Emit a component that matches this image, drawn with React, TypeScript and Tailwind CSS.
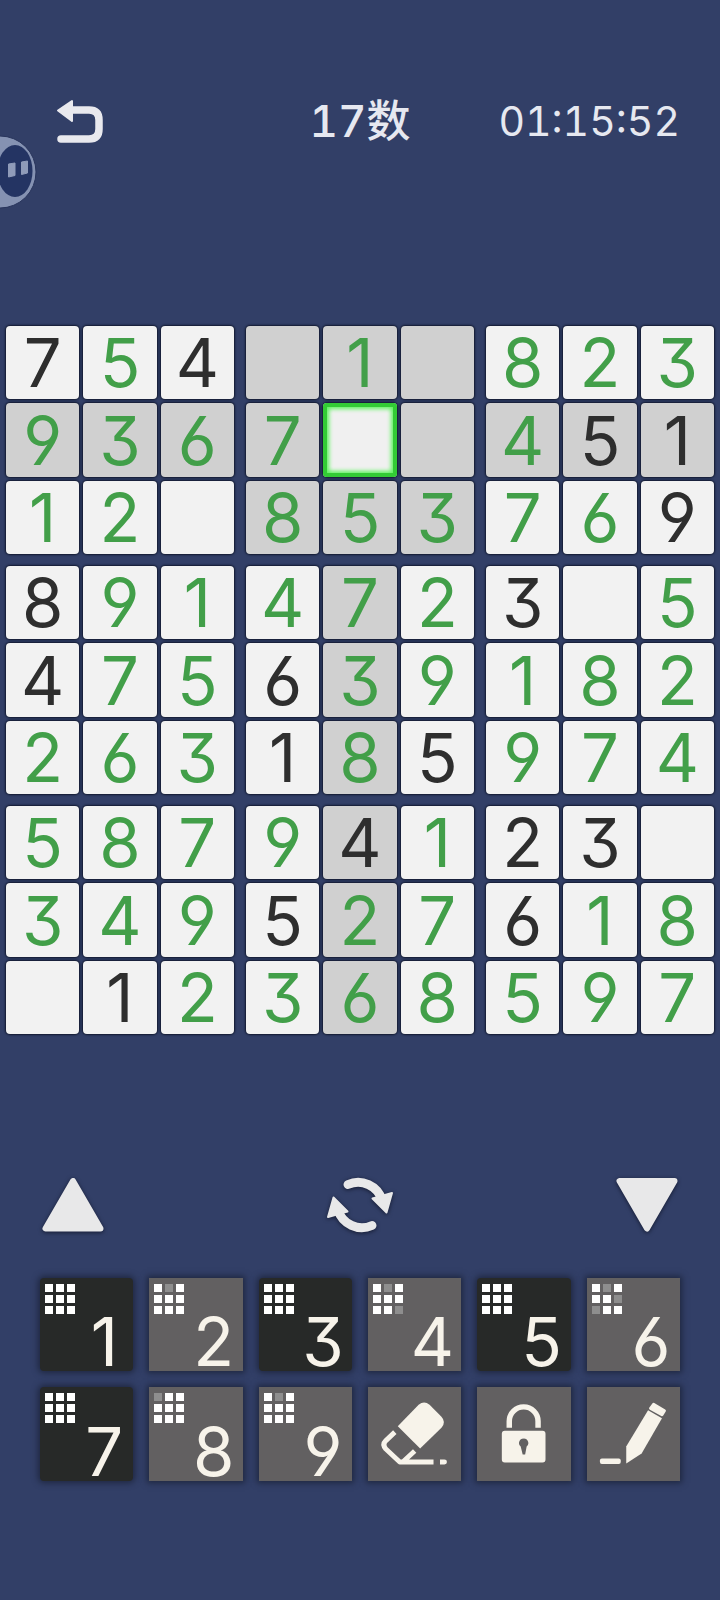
import React, { useState } from 'react';
import clsx from 'clsx';

// 0 is an empty cell
const BOARD = [
  '754010823',
  '936700451',
  '120853769',
  '891472305',
  '475639182',
  '263185974',
  '587941230',
  '349527618',
  '012368597',
];

// 1 marks the clues that came with the puzzle
const GIVEN = [
  '101000000',
  '000000011',
  '000000001',
  '100000100',
  '100100000',
  '000101000',
  '000010110',
  '000100100',
  '010000000',
];

const THREE = [0, 1, 2];

// Flat 3, open 6 and 9
const DIGIT_FONT = "font-['Inter','Liberation_Sans',sans-serif] [font-feature-settings:'cv03','cv04','cv09']";

interface CellProps {
  row: number;
  col: number;
  selected: { row: number; col: number };
  onSelect: (row: number, col: number) => void;
}

const Cell: React.FC<CellProps> = ({ row, col, selected, onSelect }) => {
  const value = BOARD[row][col];
  const isSelected = row === selected.row && col === selected.col;
  const sameBox =
    Math.floor(row / 3) === Math.floor(selected.row / 3) &&
    Math.floor(col / 3) === Math.floor(selected.col / 3);
  const isPeer = row === selected.row || col === selected.col || sameBox;

  return (
    <button
      onClick={() => onSelect(row, col)}
      aria-label={`Row ${row + 1}, column ${col + 1}`}
      className={clsx(
        'flex aspect-square min-w-0 items-center justify-center rounded text-[67px] leading-none',
        DIGIT_FONT,
        isSelected
          ? 'bg-[#f0f0f0] shadow-[0_0_2px_1px_#11182e,inset_0_0_0_4px_#33cb35,inset_0_0_4px_6px_#5cf35c]'
          : 'shadow-[0_0_2px_1px_#11182e]',
        !isSelected && (isPeer ? 'bg-[#d0d0d0]' : 'bg-[#f2f2f2]'),
        GIVEN[row][col] === '1' ? 'text-[#2e2e2e]' : 'text-[#429f49]'
      )}
    >
      {value !== '0' && value}
    </button>
  );
};

const Key: React.FC<{ digit: number }> = ({ digit }) => {
  // One dot per box, lit when the digit already stands in that box
  const boxes = Array.from({ length: 9 }, (_, box) =>
    THREE.some((r) => {
      const line = BOARD[Math.floor(box / 3) * 3 + r];
      const start = (box % 3) * 3;
      return line.slice(start, start + 3).includes(String(digit));
    })
  );
  const done = boxes.every(Boolean);

  return (
    <button
      className={clsx(
        'relative aspect-square shadow-[0_0_6px_2px_#1f2740]',
        done ? 'rounded bg-[#272928]' : 'bg-[#626061]'
      )}
    >
      <span className="absolute left-[5px] top-[6px] grid grid-cols-3 gap-[3px]">
        {boxes.map((lit, i) => (
          <span key={i} className={clsx('size-2', lit ? 'bg-white' : 'bg-[#8e8e8e]')} />
        ))}
      </span>
      <span
        className={clsx(
          'absolute bottom-0 right-0 w-[58px] text-center text-[67px] leading-[58px] text-[#f7f3ea]',
          DIGIT_FONT
        )}
      >
        {digit}
      </span>
    </button>
  );
};

const ToolKey: React.FC<{ label: string; children: React.ReactNode }> = ({ label, children }) => (
  <button aria-label={label} className="aspect-square bg-[#626061] shadow-[0_0_6px_2px_#1f2740]">
    <svg viewBox="0 0 94 94" className="size-full text-[#f7f3ea]" fill="currentColor">
      {children}
    </svg>
  </button>
);

export default function App() {
  const [selected, setSelected] = useState({ row: 1, col: 4 });

  return (
    <main className="relative min-h-screen overflow-hidden bg-[#323f67] pb-28 pt-24 text-[#e6e8f0]">
      {/* Header */}
      <header className="grid h-[50px] grid-cols-3 items-center px-10 font-['Inter','Noto_Sans_CJK_SC',sans-serif] tabular-nums">
        <button aria-label="Back" className="justify-self-start pl-4">
          <svg viewBox="0 0 48 44" className="h-11 w-12">
            <path d="M16 11h17q10 0 10 10v9q0 10-10 10H5" fill="none" stroke="#e9e9ee" strokeWidth="7.500" strokeLinecap="round" />
            <path d="M2 11.500 16 2V22Z" fill="#e9e9ee" stroke="#e9e9ee" strokeWidth="2" strokeLinejoin="round" />
          </svg>
        </button>
        <h1 className="justify-self-center whitespace-nowrap text-[44px] font-medium leading-none">17数</h1>
        <time className="justify-self-end whitespace-nowrap text-[41px] leading-none">01:15:52</time>
      </header>

      {/* Floating assistant, half tucked behind the screen edge */}
      <button aria-label="Assistant" className="absolute left-0 top-[134px]">
        <svg viewBox="0 0 40 76" className="h-[76px] w-10">
          <circle cx="0" cy="38" r="36" fill="#8592b2" stroke="#29355c" strokeWidth="1" />
          <ellipse cx="15" cy="37" rx="17.500" ry="26" fill="#243463" />
          <path d="M8.500 30 15 29v12.500L8.500 43Z M21.500 28 27.500 27v12L21.500 40.500Z" fill="#8f9bb9" stroke="#8f9bb9" strokeWidth="1" strokeLinejoin="round" />
        </svg>
      </button>

      {/* Board */}
      <section className="mt-[180px] grid grid-cols-3 gap-3 px-1.5">
        {THREE.map((boxRow) =>
          THREE.map((boxCol) => (
            <div key={`${boxRow}-${boxCol}`} className="grid grid-cols-3 gap-1">
              {THREE.map((r) =>
                THREE.map((c) => (
                  <Cell
                    key={`${r}-${c}`}
                    row={boxRow * 3 + r}
                    col={boxCol * 3 + c}
                    selected={selected}
                    onSelect={(row, col) => setSelected({ row, col })}
                  />
                ))
              )}
            </div>
          ))
        )}
      </section>

      {/* Paging and refresh */}
      <nav className="mt-[140px] flex items-center justify-between px-10">
        <button aria-label="Previous">
          <svg viewBox="0 0 66 62" className="h-[62px] w-[66px] drop-shadow-[0_1px_2px_#141a30]">
            <path d="M33 7 5.500 54.500h55Z" fill="#e8e8e9" stroke="#e8e8e9" strokeWidth="6" strokeLinejoin="round" />
          </svg>
        </button>
        <button aria-label="Refresh">
          <svg viewBox="0 0 72 62" className="h-[62px] w-[72px] drop-shadow-[0_1px_2px_#141a30]">
            <g id="turn">
              <path d="M24 10.500A25 25 0 0 1 58 26" fill="none" stroke="#e8e8e9" strokeWidth="9" strokeLinecap="round" />
              <path d="M48.500 24.500 68 19 62.500 38.500Z" fill="#e8e8e9" stroke="#e8e8e9" strokeWidth="2" strokeLinejoin="round" />
            </g>
            <use href="#turn" transform="rotate(180 36 31)" />
          </svg>
        </button>
        <button aria-label="Next">
          <svg viewBox="0 0 66 62" className="h-[62px] w-[66px] drop-shadow-[0_1px_2px_#141a30]">
            <path d="M33 54.500 5.500 7h55Z" fill="#e8e8e9" stroke="#e8e8e9" strokeWidth="6" strokeLinejoin="round" />
          </svg>
        </button>
      </nav>

      {/* Keypad */}
      <section className="mt-[42px] grid grid-cols-6 gap-4 px-10">
        {[1, 2, 3, 4, 5, 6, 7, 8, 9].map((digit) => (
          <Key key={digit} digit={digit} />
        ))}
        <ToolKey label="Erase">
          <path d="M30 39.500 51 18q5.500-5 11 0L74 30q5 5.500 0 11L52.500 62Z" />
          <path d="M27 45.500 18 54q-4 4 0 8.500L32 75.500H66M47 64.500 35 75.500" fill="none" stroke="currentColor" strokeWidth="5" strokeLinejoin="round" />
          <path d="M72.500 73h4.500a2.500 2.500 0 0 1 0 5h-4.500Z" />
        </ToolKey>
        <ToolKey label="Lock">
          <path d="M32.500 41V34.500a14.500 14.500 0 0 1 29 0V41" fill="none" stroke="currentColor" strokeWidth="5.500" />
          <path fillRule="evenodd" d="M28 44h38q3 0 3 3v26q0 3-3 3H28q-3 0-3-3V47q0-3 3-3ZM47 52a4.500 4.500 0 0 0-3 8l2 8h2.500l1.500-8a4.500 4.500 0 0 0-3-8Z" />
        </ToolKey>
        <ToolKey label="Notes">
          <rect x="13" y="72" width="21" height="5.500" rx="2" />
          <path d="M61.500 23.500 75.500 31.500 55 67 39.500 77V60Z" />
          <path d="M67 17.500 78 24l-2.500 4-11.500-6.500Z" stroke="currentColor" strokeWidth="3" strokeLinejoin="round" />
        </ToolKey>
      </section>
    </main>
  );
}
